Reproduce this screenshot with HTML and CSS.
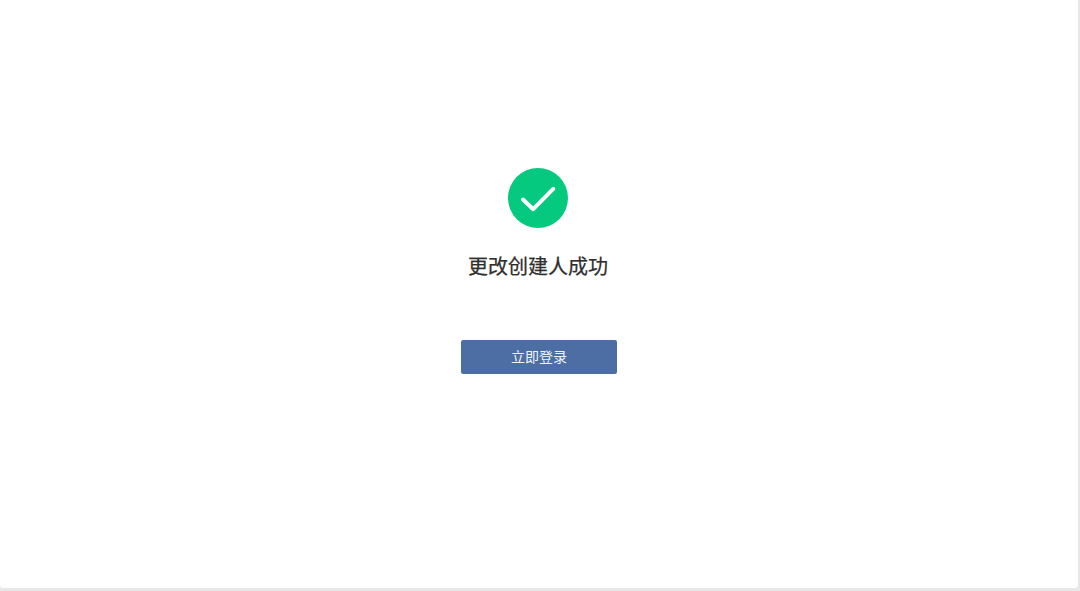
FILE: index.html
```html
<!DOCTYPE html>
<html lang="zh-CN">
<head>
<meta charset="utf-8">
<title>更改创建人成功</title>
<link rel="stylesheet" href="styles.css">
</head>
<body>
<main class="panel">
  <div class="result">
    <svg class="icon" width="60" height="60" viewBox="0 0 60 60" aria-hidden="true">
      <circle cx="30" cy="30" r="30" fill="#04c97f"/>
      <path d="M15 31.5 L25.2 41.2 L45.2 20.8" fill="none" stroke="#fff" stroke-width="4" stroke-linecap="round" stroke-linejoin="round"/>
    </svg>
    <h1 class="title">更改创建人成功</h1>
  </div>
  <button class="login" type="button">立即登录</button>
</main>
</body>
</html>
```
FILE: styles.css
```css
html, body {
  margin: 0;
  height: 100%;
  background: #e8e8e8;
}
body {
  overflow: hidden;
  font-family: "Noto Sans CJK SC", "Liberation Sans", sans-serif;
}
.panel {
  box-sizing: border-box;
  width: 1078px;
  height: 588px;
  padding-top: 168px;
  background: #fff;
  border-radius: 0 0 3px 3px;
  display: flex;
  flex-direction: column;
  align-items: center;
}
.result {
  display: flex;
  flex-direction: column;
  align-items: center;
  margin-right: 2px;
}
.icon {
  display: block;
}
.title {
  margin: 23px 0 0;
  font-size: 20px;
  line-height: 30px;
  font-weight: 400;
  color: #2e2e2e;
  -webkit-text-stroke: 0.25px #2e2e2e;
}
.login {
  width: 156px;
  height: 34px;
  margin-top: 59px;
  padding: 0 0 2px;
  border: 0;
  border-radius: 2px;
  background: #4c6ea5;
  color: #eef2f7;
  font-family: inherit;
  font-size: 14px;
}
```
